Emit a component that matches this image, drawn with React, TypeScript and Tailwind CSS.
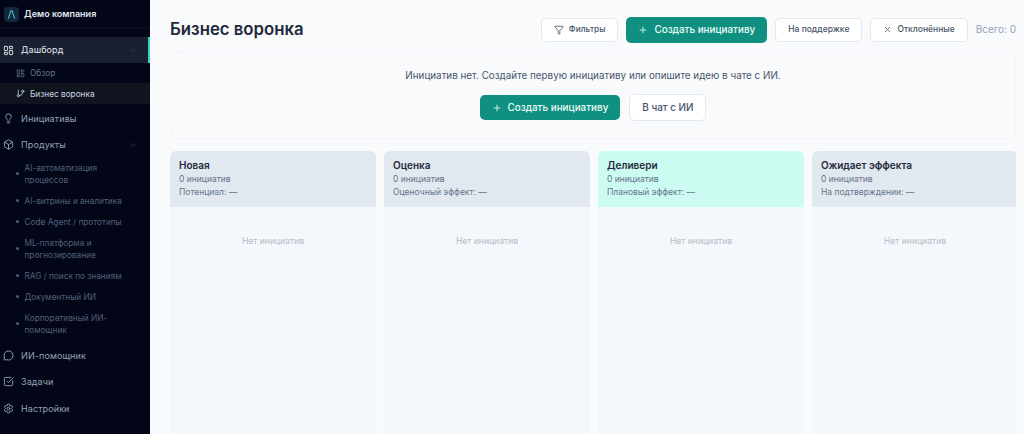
import { Box, ChevronDown, Filter, GitBranch, Lightbulb, LayoutDashboard, MessageCircle, Plus, Settings, SquareCheckBig, X } from 'lucide-react';
import type { ReactNode } from 'react';

const FONT = { fontFamily: 'Inter, "Noto Sans", sans-serif' };

const products = [
  'AI-автоматизация процессов',
  'AI-витрины и аналитика',
  'Code Agent / прототипы',
  'ML-платформа и прогнозирование',
  'RAG / поиск по знаниям',
  'Документный ИИ',
  'Корпоративный ИИ-помощник',
];

const columns = [
  { title: 'Новая', metric: 'Потенциал: —', head: 'bg-[#e2e8f0]' },
  { title: 'Оценка', metric: 'Оценочный эффект: —', head: 'bg-[#e2e8f0]' },
  { title: 'Деливери', metric: 'Плановый эффект: —', head: 'bg-[#ccfbf1]' },
  { title: 'Ожидает эффекта', metric: 'На подтверждении: —', head: 'bg-[#e2e8f0]' },
];

function NavItem({ icon, label, chevron }: { icon: ReactNode; label: string; chevron?: boolean }) {
  return (
    <div className="flex h-[26.5px] items-center gap-[7px] pl-[3px] pr-[12px] text-[9px] tracking-[0.1px] text-[#94a3b8]">
      {icon}
      <span className="flex-1">{label}</span>
      {chevron ? <ChevronDown className="size-[10px] text-[#334155]" /> : null}
    </div>
  );
}

function Sidebar() {
  return (
    <aside className="flex h-[434px] w-[150px] shrink-0 flex-col overflow-hidden bg-[#020617]">
      <div className="flex h-[29px] items-center gap-[5px] border-b border-[#0b1120] pl-[4px]">
        <div className="flex size-[15px] items-center justify-center rounded-[4px] bg-[#13283c]">
          <svg viewBox="0 0 12 12" className="size-[11px]" fill="none" stroke="#3fb6d0" strokeWidth="1.3">
            <path d="M2.5 10.5 5.4 2h1.2l2.9 8.5" />
          </svg>
        </div>
        <span className="text-[9px] font-semibold text-[#e2e8f0]">Демо компания</span>
      </div>

      <nav className="mt-[8px] flex flex-col">
        <div className="flex h-[26px] items-center gap-[7px] border-r-2 border-[#2dd4bf] bg-[#1a2030] pl-[3px] pr-[10px] text-[9px] tracking-[0.1px] text-[#e2e8f0]">
          <LayoutDashboard className="size-[11px]" />
          <span className="flex-1">Дашборд</span>
          <ChevronDown className="size-[10px] text-[#334155]" />
        </div>
        <div className="flex h-[20px] items-center gap-[5px] pl-[16px] text-[8.25px] text-[#64748b]">
          <LayoutDashboard className="size-[9px]" />
          <span>Обзор</span>
        </div>
        <div className="mb-[1px] flex h-[21px] items-center gap-[5px] bg-[#10141f] pl-[16px] text-[8.25px] text-[#cbd5e1]">
          <GitBranch className="size-[9px]" />
          <span className="pt-[1px]">Бизнес воронка</span>
        </div>
        <NavItem icon={<Lightbulb className="size-[11px]" />} label="Инициативы" />
        <NavItem icon={<Box className="size-[11px]" />} label="Продукты" chevron />
        <ul className="-mt-[1px] mb-[2px] flex flex-col">
          {products.map((p) => (
            <li key={p} className="flex items-center gap-[6px] py-[4.5px] pl-[16px] pr-[16px] text-[8.25px] leading-[12px] text-[#526077]">
              <span className="size-[2.5px] shrink-0 rounded-full bg-[#526077]" />
              <span>{p}</span>
            </li>
          ))}
        </ul>
        <NavItem icon={<MessageCircle className="size-[11px]" />} label="ИИ-помощник" />
        <NavItem icon={<SquareCheckBig className="size-[11px]" />} label="Задачи" />
        <NavItem icon={<Settings className="size-[11px]" />} label="Настройки" />
      </nav>
    </aside>
  );
}

function Column({ title, metric, head }: { title: string; metric: string; head: string }) {
  return (
    <section className="flex w-[206px] shrink-0 flex-col rounded-t-[6px] bg-[#f4f7fb]">
      <header className={`h-[56px] rounded-t-[6px] px-[9px] pt-[8px] ${head}`}>
        <h2 className="text-[10px] font-semibold leading-[13px] text-[#1e293b]">{title}</h2>
        <p className="mt-[1px] text-[8.5px] leading-[13px] text-[#64748b]">0 инициатив</p>
        <p className="text-[8.5px] leading-[13px] text-[#64748b]">{metric}</p>
      </header>
      <p className="pt-[28px] text-center text-[8.6px] text-[#b4bcc9]">Нет инициатив</p>
    </section>
  );
}

export default function App() {
  return (
    <div className="flex h-[434px] w-[1024px] overflow-hidden bg-[#f8fafc]" style={FONT}>
      <Sidebar />
      <main className="flex min-w-0 flex-1 flex-col pl-[20px] pr-[8px] pt-[16px]">
        <div className="flex h-[27px] items-center">
          <h1 className="flex-1 pt-[1px] text-[16.75px] font-semibold text-[#1e293b]">Бизнес воронка</h1>
          <div className="flex items-center gap-[8px]">
            <button type="button" className="flex h-[24px] items-center gap-[5px] rounded-[5px] border border-[#e2e8f0] bg-white px-[12px] text-[8.25px] font-medium text-[#475569]">
              <Filter className="size-[10px]" />
              Фильтры
            </button>
            <button type="button" className="flex h-[26px] items-center gap-[6px] rounded-[5px] bg-[#0f9080] px-[12px] text-[9.9px] font-medium text-[#ecfdf5]">
              <Plus className="size-[10px]" />
              Создать инициативу
            </button>
            <button type="button" className="flex h-[24px] items-center rounded-[5px] border border-[#e2e8f0] bg-white px-[12px] text-[8.5px] font-medium text-[#475569]">
              На поддержке
            </button>
            <button type="button" className="flex h-[24px] items-center gap-[5px] rounded-[5px] border border-[#e2e8f0] bg-white px-[12px] text-[8.5px] font-medium text-[#475569]">
              <X className="size-[9px]" />
              Отклонённые
            </button>
            <span className="text-[10px] text-[#94a3b8]">Всего: 0</span>
          </div>
        </div>

        <div className="mt-[8px] flex h-[88px] flex-col items-center rounded-[8px] border border-[#f1f5f9] pt-[16px]">
          <p className="text-[9.85px] leading-[14px] text-[#475569]">
            Инициатив нет. Создайте первую инициативу или опишите идею в чате с ИИ.
          </p>
          <div className="mt-[12px] flex items-center gap-[9px]">
            <button type="button" className="flex h-[25px] items-center gap-[6px] rounded-[5px] bg-[#0f9080] px-[12px] text-[9.9px] font-medium text-[#ecfdf5]">
              <Plus className="size-[10px]" />
              Создать инициативу
            </button>
            <button type="button" className="flex h-[27px] items-center rounded-[5px] border border-[#e2e8f0] bg-white px-[12px] text-[9.9px] font-medium text-[#475569]">
              В чат с ИИ
            </button>
          </div>
        </div>

        <div className="mt-[12px] flex min-h-0 flex-1 gap-[8px] overflow-hidden">
          {columns.map((c) => (
            <Column key={c.title} {...c} />
          ))}
        </div>
      </main>
    </div>
  );
}
